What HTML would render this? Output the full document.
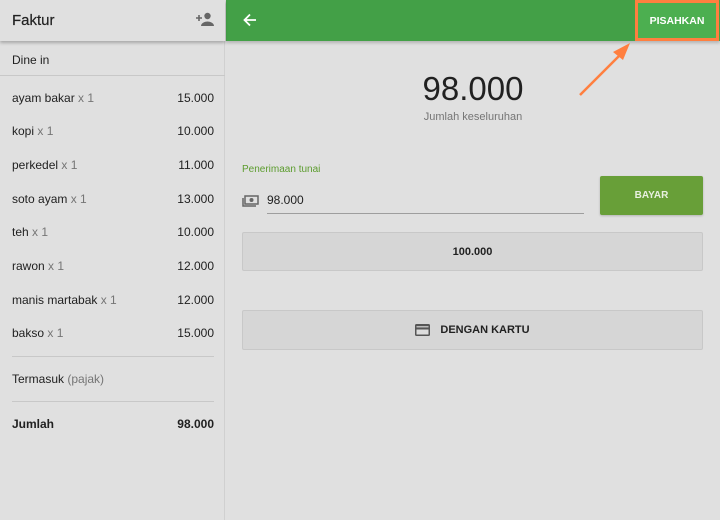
<!DOCTYPE html>
<html><head><style>
*{margin:0;padding:0;box-sizing:border-box}
body{width:720px;height:520px;background:#e0e0e0;font-family:"Liberation Sans",sans-serif;position:relative;overflow:hidden;color:#212121}
.abs{position:absolute}
.left{left:0;top:0;width:225px;height:520px;border-right:1px solid #d0d0d0}
.lh{left:0;top:0;width:225px;height:41px;box-shadow:0 2px 3px rgba(0,0,0,.25);background:#e0e0e0;z-index:2}
.row{position:absolute;left:12px;width:202px;font-size:12px;display:flex;justify-content:space-between}
.g{color:#757575}
.hr{position:absolute;left:12px;width:202px;height:1px;background:#c8c8c8}
.btn{position:absolute;background:#d6d6d6;border:1px solid #c8c8c8;border-radius:2px;font-size:11px;font-weight:bold;display:flex;align-items:center;justify-content:center}
</style></head><body>
<div class="abs left"></div>
<div class="abs lh">
<div class="abs" style="left:12px;top:12px;font-size:15px;font-weight:500;-webkit-text-stroke:0.2px #212121">Faktur</div>
<svg class="abs" style="left:196px;top:12px" width="18" height="14" viewBox="0 0 18 14"><circle cx="11.5" cy="4" r="3.2" fill="#666"/><path d="M5 14c0-3 4-4.5 6.5-4.5S18 11 18 14z" fill="#666"/><path d="M3 3v6M0 6h6" stroke="#666" stroke-width="1.6"/></svg>
</div>
<div class="row" style="top:53px">Dine in</div>
<div class="abs" style="left:0;top:75px;width:225px;height:1px;background:#c8c8c8"></div>
<div class="row" style="top:91px"><span>ayam bakar <span class="g">x 1</span></span><span>15.000</span></div>
<div class="row" style="top:124px"><span>kopi <span class="g">x 1</span></span><span>10.000</span></div>
<div class="row" style="top:158px"><span>perkedel <span class="g">x 1</span></span><span>11.000</span></div>
<div class="row" style="top:192px"><span>soto ayam <span class="g">x 1</span></span><span>13.000</span></div>
<div class="row" style="top:225px"><span>teh <span class="g">x 1</span></span><span>10.000</span></div>
<div class="row" style="top:259px"><span>rawon <span class="g">x 1</span></span><span>12.000</span></div>
<div class="row" style="top:293px"><span>manis martabak <span class="g">x 1</span></span><span>12.000</span></div>
<div class="row" style="top:326px"><span>bakso <span class="g">x 1</span></span><span>15.000</span></div>
<div class="hr" style="top:356px"></div>
<div class="row" style="top:372px"><span>Termasuk <span class="g">(pajak)</span></span></div>
<div class="hr" style="top:401px"></div>
<div class="row" style="top:417px;font-weight:bold"><span>Jumlah</span><span>98.000</span></div>

<div class="abs" style="left:226px;top:0;width:494px;height:41px;background:#43a047;box-shadow:0 2px 3px rgba(0,0,0,.2)"></div>
<svg class="abs" style="left:243px;top:13px" width="14" height="14" viewBox="0 0 14 14"><path d="M13 7H2M7 1.5L1.5 7 7 12.5" stroke="#fff" stroke-width="1.8" fill="none"/></svg>
<div class="abs" style="left:635px;top:0;width:84px;height:41px;background:#4caf50;border:3px solid #ff7f3f;color:#fff;font-size:10.5px;font-weight:bold;display:flex;align-items:center;justify-content:center">PISAHKAN</div>
<svg class="abs" style="left:575px;top:38px" width="60" height="62" viewBox="0 0 60 62"><path d="M5 57L50 12" stroke="#ff7f3f" stroke-width="2.5"/><path d="M55 5L38 14L48 22Z" fill="#ff7f3f"/></svg>

<div class="abs" style="left:226px;top:70px;width:494px;text-align:center;font-size:33px">98.000</div>
<div class="abs" style="left:226px;top:111px;width:494px;text-align:center;font-size:11px;color:#757575">Jumlah keseluruhan</div>
<div class="abs" style="left:242px;top:164px;font-size:10px;color:#5c9c2e">Penerimaan tunai</div>
<svg class="abs" style="left:242px;top:195px" width="17" height="13" viewBox="0 0 17 13"><rect x="3" y="1" width="13" height="8" fill="none" stroke="#666" stroke-width="1.5"/><circle cx="9.5" cy="5" r="2" fill="#666"/><path d="M1 3v8h13" stroke="#666" stroke-width="1.5" fill="none"/></svg>
<div class="abs" style="left:267px;top:193px;font-size:12px">98.000</div>
<div class="abs" style="left:267px;top:213px;width:317px;height:1px;background:#9e9e9e"></div>
<div class="abs" style="left:600px;top:176px;width:103px;height:39px;background:#689f38;color:#e8f0e0;font-size:10px;font-weight:bold;display:flex;align-items:center;justify-content:center;border-radius:2px;box-shadow:0 1px 2px rgba(0,0,0,.2)">BAYAR</div>
<div class="btn" style="left:242px;top:232px;width:461px;height:39px">100.000</div>
<div class="btn" style="left:242px;top:310px;width:461px;height:40px"><svg width="15" height="12" viewBox="0 0 15 12" style="margin-right:10px"><rect x="0" y="0" width="15" height="12" rx="1.5" fill="#555"/><rect x="1.5" y="2" width="12" height="1.5" fill="#bbb"/><rect x="1.5" y="5.5" width="12" height="5" fill="#ddd"/></svg>DENGAN KARTU</div>
</body></html>
